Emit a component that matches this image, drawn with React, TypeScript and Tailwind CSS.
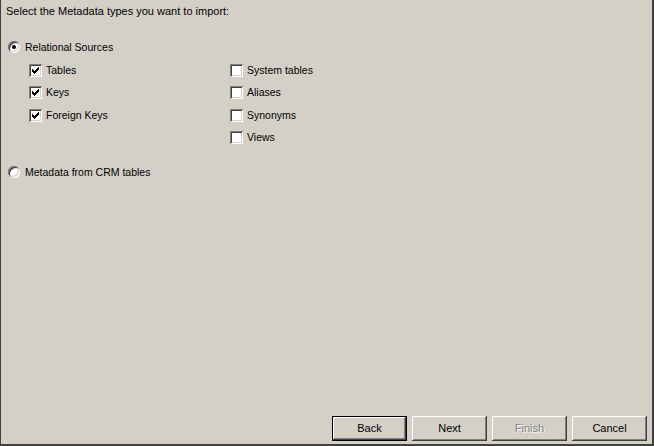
import React from "react";

const font = { fontFamily: '"Liberation Sans", Arial, sans-serif' };

function Check() {
  const cols = [3, 4, 5, 6, 7, 8, 9];
  const tops = [5, 6, 7, 6, 5, 4, 3];
  return (
    <svg width="13" height="13" viewBox="0 0 13 13" shapeRendering="crispEdges" className="block">
      {cols.map((x, i) => (
        <rect key={x} x={x} y={tops[i]} width="1" height="3" fill="#000" />
      ))}
    </svg>
  );
}

function CheckBox({ checked, label }: { checked?: boolean; label: string }) {
  return (
    <div className="flex h-[22.5px] items-center gap-[4px]">
      <div className="h-[13px] w-[13px] shrink-0 bg-white shadow-[inset_1px_1px_#808080,inset_-1px_-1px_#ffffff,inset_2px_2px_#404040,inset_-2px_-2px_#d4d0c8]">
        {checked ? <Check /> : null}
      </div>
      <span className="text-[10.5px] leading-[13px] text-black">{label}</span>
    </div>
  );
}

function Radio({ checked, label }: { checked?: boolean; label: string }) {
  return (
    <div className="flex h-[14px] items-center gap-[5px] pl-[7px]">
      <div className="flex h-[12px] w-[12px] shrink-0 items-center justify-center rounded-full bg-white shadow-[inset_1px_1px_#808080,inset_-1px_-1px_#ffffff,inset_2px_2px_#404040,inset_-2px_-2px_#d4d0c8]">
        {checked ? <div className="h-[4px] w-[4px] rounded-full bg-black" /> : null}
      </div>
      <span className="text-[10.5px] leading-[13px] text-black">{label}</span>
    </div>
  );
}

function Btn({ label, isDefault, disabled }: { label: string; isDefault?: boolean; disabled?: boolean }) {
  const face =
    "flex h-full w-full items-center justify-center bg-[#d4d0c8] text-[11px] shadow-[inset_-1px_-1px_#404040,inset_1px_1px_#ffffff,inset_-2px_-2px_#808080]";
  return (
    <div className={isDefault ? "h-[25px] w-[75px] border border-black" : "h-[25px] w-[75px]"}>
      <div className={face}>
        <span
          className={
            disabled ? "text-[#808080] [text-shadow:1px_1px_0_#ffffff]" : "text-black"
          }
        >
          {label}
        </span>
      </div>
    </div>
  );
}

export default function App() {
  return (
    <div
      style={font}
      className="flex h-[446px] w-[654px] flex-col border-b-2 border-l border-r-2 border-b-[#404040] border-l-[#404040] border-r-[#404040] bg-[#d4d0c8] text-black"
    >
      <div className="h-[18px] shrink-0 pl-[5px] pt-[5px] text-[11px] leading-[13px]">
        Select the Metadata types you want to import:
      </div>
      <div className="mt-[22px]">
        <Radio checked label="Relational Sources" />
      </div>
      <div className="mt-[5px] flex pl-[28px]">
        <div className="flex w-[201px] flex-col">
          <CheckBox checked label="Tables" />
          <CheckBox checked label="Keys" />
          <CheckBox checked label="Foreign Keys" />
        </div>
        <div className="flex flex-col">
          <CheckBox label="System tables" />
          <CheckBox label="Aliases" />
          <CheckBox label="Synonyms" />
          <CheckBox label="Views" />
        </div>
      </div>
      <div className="mt-[16px]">
        <Radio label="Metadata from CRM tables" />
      </div>
      <div className="flex-1" />
      <div className="mb-[3px] flex justify-end gap-[5px] pr-[5px]">
        <Btn label="Back" isDefault />
        <Btn label="Next" />
        <Btn label="Finish" disabled />
        <Btn label="Cancel" />
      </div>
    </div>
  );
}
